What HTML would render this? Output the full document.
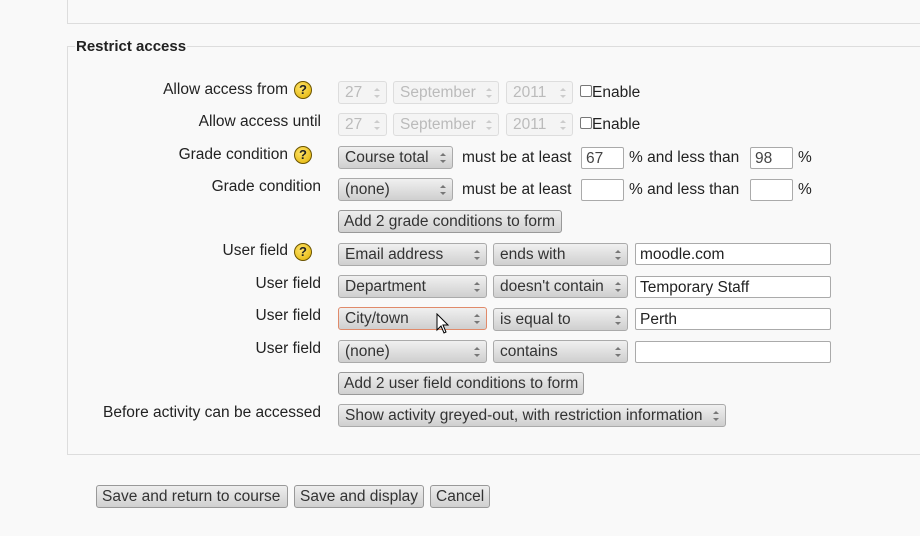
<!DOCTYPE html>
<html><head><meta charset="utf-8"><style>
body{margin:0;width:920px;height:536px;background:#f9f9f9;font-family:"Liberation Sans",sans-serif;color:#222;position:relative;overflow:hidden}
.a{position:absolute}
.top{left:67px;top:-2px;width:900px;height:25px;border:1px solid #ddd;border-top:none}
.fs{left:67px;top:46px;width:900px;height:407px;border:1px solid #ddd}
.leg{left:75px;top:38px;font-weight:bold;font-size:15px;background:#f9f9f9;padding:0 1px}
.lbl{font-size:15.5px;text-align:right;width:321px;left:0;line-height:18px;white-space:nowrap}
.sel{border:1px solid #aaa;border-radius:3px;background:linear-gradient(#f0f0f0,#cfcfcf);font-size:15.5px;line-height:22px;padding-left:6px;box-sizing:border-box;height:23px;color:#333;white-space:nowrap}
.sel::after{content:"";position:absolute;right:6px;top:6px;width:0;height:0;border-left:3px solid transparent;border-right:3px solid transparent;border-bottom:3px solid #777}
.sel::before{content:"";position:absolute;right:6px;top:13px;width:0;height:0;border-left:3px solid transparent;border-right:3px solid transparent;border-top:3px solid #777}
.dis{background:#f4f4f4;border-color:#ddd;color:#bbb}
.dis::after{border-bottom-color:#ccc}.dis::before{border-top-color:#ccc}
.inp{height:22px;border:1px solid #aaa;border-radius:2px;background:#fff;box-sizing:border-box;font-size:15.5px;line-height:21px;padding-left:4px;color:#222}
.btn{height:23px;border:1px solid #999;border-radius:3px;background:linear-gradient(#eee,#d0d0d0);box-sizing:border-box;font-size:15.5px;line-height:22px;padding:0 5px;color:#333;white-space:nowrap}
.t{font-size:15.5px;line-height:18px;white-space:nowrap}
.h{width:18px;height:18px;border-radius:50%;background:radial-gradient(circle at 40% 35%,#ffe46a,#e0b000);border:1px solid #6b5400;box-sizing:border-box;font-weight:bold;font-size:13px;text-align:center;line-height:16px;color:#222}
.cb{width:10px;height:10px;border:1px solid #777;border-radius:2px;background:#fff}
</style></head><body>
<div class="a top"></div>
<div class="a fs"></div>
<div class="a leg">Restrict access</div>

<div class="a lbl" style="top:81px;width:288px">Allow access from</div><div class="a h" style="left:294px;top:81px">?</div>
<div class="a lbl" style="top:113px">Allow access until</div>
<div class="a lbl" style="top:146px;width:288px">Grade condition</div><div class="a h" style="left:294px;top:146px">?</div>
<div class="a lbl" style="top:178px">Grade condition</div>
<div class="a lbl" style="top:242px;width:288px">User field</div><div class="a h" style="left:294px;top:243px">?</div>
<div class="a lbl" style="top:275px">User field</div>
<div class="a lbl" style="top:307px">User field</div>
<div class="a lbl" style="top:340px">User field</div>
<div class="a lbl" style="top:404px">Before activity can be accessed</div>

<div class="a sel dis" style="left:338px;top:81px;width:49px">27</div>
<div class="a sel dis" style="left:393px;top:81px;width:106px">September</div>
<div class="a sel dis" style="left:506px;top:81px;width:67px">2011</div>
<div class="a cb" style="left:580px;top:85px"></div><div class="a t" style="left:592px;top:84px">Enable</div>
<div class="a sel dis" style="left:338px;top:113px;width:49px">27</div>
<div class="a sel dis" style="left:393px;top:113px;width:106px">September</div>
<div class="a sel dis" style="left:506px;top:113px;width:67px">2011</div>
<div class="a cb" style="left:580px;top:117px"></div><div class="a t" style="left:592px;top:116px">Enable</div>

<div class="a sel" style="left:338px;top:146px;width:115px">Course total</div>
<div class="a t" style="left:462px;top:149px">must be at least</div>
<div class="a inp" style="left:581px;top:147px;width:43px;color:#444">67</div>
<div class="a t" style="left:629px;top:149px">% and less than</div>
<div class="a inp" style="left:750px;top:147px;width:43px;color:#444">98</div>
<div class="a t" style="left:798px;top:149px">%</div>

<div class="a sel" style="left:338px;top:178px;width:115px">(none)</div>
<div class="a t" style="left:462px;top:181px">must be at least</div>
<div class="a inp" style="left:581px;top:179px;width:43px"></div>
<div class="a t" style="left:629px;top:181px">% and less than</div>
<div class="a inp" style="left:750px;top:179px;width:43px"></div>
<div class="a t" style="left:798px;top:181px">%</div>

<div class="a btn" style="left:338px;top:210px;width:224px">Add 2 grade conditions to form</div>

<div class="a sel" style="left:338px;top:243px;width:149px">Email address</div>
<div class="a sel" style="left:493px;top:243px;width:135px">ends with</div>
<div class="a inp" style="left:635px;top:243px;width:196px">moodle.com</div>
<div class="a sel" style="left:338px;top:275px;width:149px">Department</div>
<div class="a sel" style="left:493px;top:275px;width:135px">doesn't contain</div>
<div class="a inp" style="left:635px;top:276px;width:196px">Temporary Staff</div>
<div class="a sel" style="left:338px;top:307px;width:149px;border-color:#e08a6a">City/town</div>
<div class="a sel" style="left:493px;top:308px;width:135px">is equal to</div>
<div class="a inp" style="left:635px;top:308px;width:196px">Perth</div>
<div class="a sel" style="left:338px;top:340px;width:149px">(none)</div>
<div class="a sel" style="left:493px;top:340px;width:135px">contains</div>
<div class="a inp" style="left:635px;top:341px;width:196px"></div>

<svg class="a" style="left:436px;top:313px" width="14" height="22" viewBox="0 0 14 22"><path d="M1 1 L1 17 L5 13 L8 20 L10 19 L7 12 L12 12 Z" fill="#fff" stroke="#000" stroke-width="1"/></svg>

<div class="a btn" style="left:338px;top:372px;width:246px">Add 2 user field conditions to form</div>
<div class="a sel" style="left:338px;top:404px;width:388px">Show activity greyed-out, with restriction information</div>

<div class="a btn" style="left:96px;top:485px;width:192px">Save and return to course</div>
<div class="a btn" style="left:294px;top:485px;width:130px">Save and display</div>
<div class="a btn" style="left:430px;top:485px;width:60px">Cancel</div>
</body></html>
